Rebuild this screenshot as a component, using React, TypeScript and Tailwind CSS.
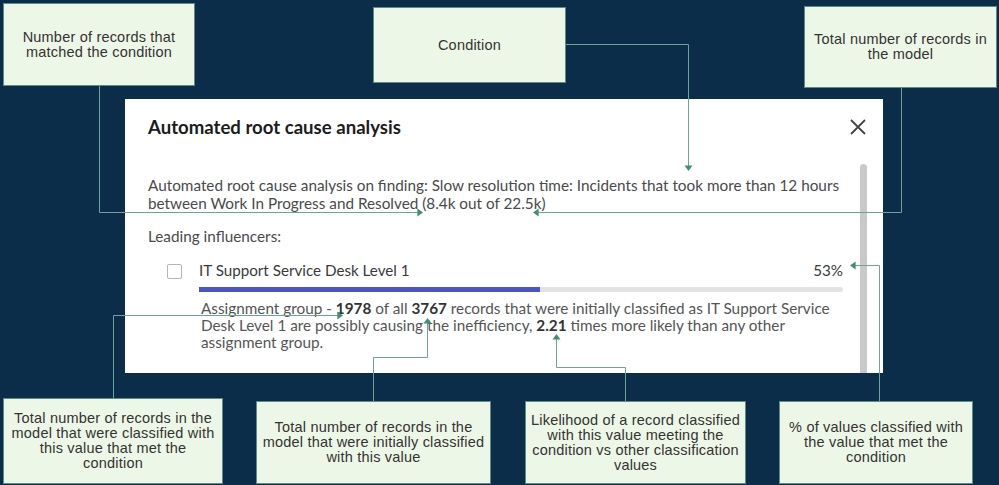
import React from "react";

const boxCls =
  "flex items-center justify-center text-center bg-[#edf7e7] border border-[#5e8c82] text-[#333] text-[14.5px] leading-[15px] tracking-[0.2px] whitespace-nowrap";
const boxFont = { fontFamily: '"Liberation Sans", Arial, sans-serif' };

function Arrow({ x, y, dir }: { x: number; y: number; dir: "r" | "l" | "u" | "d" }) {
  const s = 4;
  let pts = "";
  if (dir === "r") pts = `${x},${y} ${x - s * 1.4},${y - s} ${x - s * 1.4},${y + s}`;
  if (dir === "l") pts = `${x},${y} ${x + s * 1.4},${y - s} ${x + s * 1.4},${y + s}`;
  if (dir === "u") pts = `${x},${y} ${x - s},${y + s * 1.4} ${x + s},${y + s * 1.4}`;
  if (dir === "d") pts = `${x},${y} ${x - s},${y - s * 1.4} ${x + s},${y - s * 1.4}`;
  return <polygon points={pts} fill="#3f8f78" />;
}

export default function App() {
  const lc = "#6aa596";
  return (
    <div
      className="relative w-[999px] h-[485px] overflow-hidden bg-[#0c2d4a]"
      style={{ fontFamily: '"Lato", "Liberation Sans", sans-serif' }}
    >
      {/* top row */}
      <div className="flex items-start h-[99px]" style={boxFont}>
        <div className={`${boxCls} ml-[3px] mt-[3px] w-[192px] h-[83px]`}>
          Number of records that
          <br />
          matched the condition
        </div>
        <div className={`${boxCls} ml-[178px] mt-[7px] w-[193px] h-[76px]`}>Condition</div>
        <div className={`${boxCls} ml-[238px] mt-[6px] w-[193px] h-[82px]`}>
          Total number of records in
          <br />
          the model
        </div>
      </div>

      {/* panel */}
      <div className="ml-[125px] w-[758px] h-[274px] bg-white relative">
        <div className="pl-[23px] pt-[16px] flex items-center justify-between pr-[16px]">
          <div className="text-[18.6px] font-bold text-[#1c1c1c] leading-[24px]">
            Automated root cause analysis
          </div>
          <svg width="18" height="18" viewBox="0 0 18 18">
            <path d="M2 2 L16 16 M16 2 L2 16" stroke="#444" strokeWidth="1.8" />
          </svg>
        </div>
        <div className="absolute left-[735px] top-[65px] w-[7px] h-[209px] rounded-t-full bg-[#c9c9c9]" />
        <div className="pl-[23px] mt-[37px] text-[15.3px] leading-[18px] text-[#4a4a4a] w-[730px]">
          Automated root cause analysis on finding: Slow resolution time: Incidents that took more than 12 hours
          between Work In Progress and Resolved (8.4k out of 22.5k)
        </div>
        <div className="pl-[23px] mt-[15px] text-[15.3px] leading-[18px] text-[#4a4a4a]">Leading influencers:</div>
        <div className="flex items-start mt-[15px] pl-[42px]">
          <div className="w-[15px] h-[15px] border border-[#b5b5b5] rounded-[2px] mt-[4px] shrink-0" />
          <div className="ml-[17px] w-[644px]">
            <div className="flex justify-between text-[15.2px] leading-[20px] text-[#3a3a3a]">
              <span>IT Support Service Desk Level 1</span>
              <span>53%</span>
            </div>
            <div className="mt-[7px] h-[5px] bg-[#e3e3e3] rounded-full relative">
              <div className="h-[5px] bg-[#4a56c6] w-[341px]" />
            </div>
            <div className="mt-[8px] pl-[2px] text-[15.3px] leading-[17px] text-[#555] w-[636px]">
              Assignment group - <span className="font-bold text-[#333]">1978</span> of all{" "}
              <span className="font-bold text-[#333]">3767</span> records that were initially classified as IT Support
              Service Desk Level 1 are possibly causing the inefficiency,{" "}
              <span className="font-bold text-[#333]">2.21</span> times more likely than any other assignment group.
            </div>
          </div>
        </div>
      </div>

      {/* bottom row */}
      <div className="flex items-start" style={boxFont}>
        <div className={`${boxCls} ml-[3px] mt-[25px] w-[220px] h-[86px]`}>
          Total number of records in the
          <br />
          model that were classified with
          <br />
          this value that met the
          <br />
          condition
        </div>
        <div className={`${boxCls} ml-[33px] mt-[28px] w-[235px] h-[83px]`}>
          Total number of records in the
          <br />
          model that were initially classified
          <br />
          with this value
        </div>
        <div className={`${boxCls} ml-[34px] mt-[28px] w-[221px] h-[83px]`}>
          Likelihood of a record classified
          <br />
          with this value meeting the
          <br />
          condition vs other classification
          <br />
          values
        </div>
        <div className={`${boxCls} ml-[33px] mt-[28px] w-[194px] h-[83px]`}>
          % of values classified with
          <br />
          the value that met the
          <br />
          condition
        </div>
      </div>

      {/* connector lines overlay */}
      <svg className="absolute inset-0 pointer-events-none" width="999" height="485" viewBox="0 0 999 485">
        <g fill="none" stroke={lc} strokeWidth="1">
          <polyline points="99.5,86 99.5,212.5 419,212.5" />
          <polyline points="566,44.5 688.5,44.5 688.5,167" />
          <polyline points="901.5,88 901.5,212.5 537,212.5" />
          <polyline points="113.5,398 113.5,315.5 339,315.5" />
          <polyline points="373.5,401 373.5,357.5 427.5,357.5 427.5,322" />
          <polyline points="625.5,401 625.5,367.5 556.5,367.5 556.5,338" />
          <polyline points="879.5,401 879.5,265.5 854,265.5" />
        </g>
        <Arrow x={423} y={212.5} dir="r" />
        <Arrow x={688.5} y={171} dir="d" />
        <Arrow x={533} y={212.5} dir="l" />
        <Arrow x={343} y={315.5} dir="r" />
        <Arrow x={427.5} y={318} dir="u" />
        <Arrow x={556.5} y={334} dir="u" />
        <Arrow x={850} y={265.5} dir="l" />
      </svg>
    </div>
  );
}
